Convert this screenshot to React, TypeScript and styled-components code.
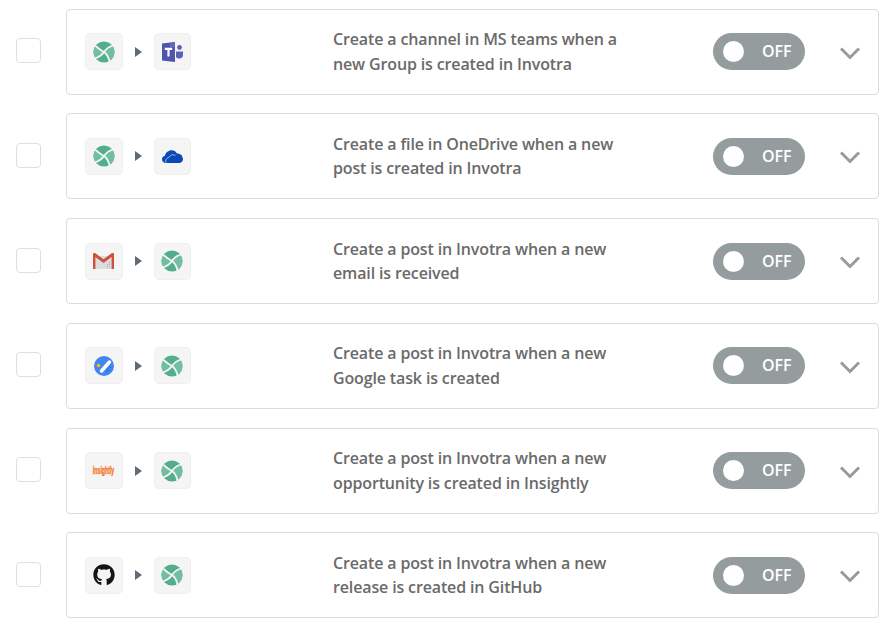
import styled, { createGlobalStyle } from "styled-components";
import { FaGithub } from "react-icons/fa";
import { ReactNode } from "react";

const GlobalStyle = createGlobalStyle`
  html, body {
    margin: 0;
    padding: 0;
    background: #fff;
    font-family: "Open Sans", "Liberation Sans", sans-serif;
  }
`;

const List = styled.div`
  display: flex;
  flex-direction: column;
  gap: 18.75px;
  padding: 8.6px 7px 0 16px;
`;

const Row = styled.div`
  display: flex;
  align-items: center;
  gap: 25px;
`;

const Checkbox = styled.div`
  width: 25px;
  height: 25px;
  margin-bottom: 2px;
  flex-shrink: 0;
  box-sizing: border-box;
  border: 1px solid #d9e1e1;
  border-radius: 4px;
  background: #fff;
`;

const Card = styled.div`
  flex: 1;
  height: 86px;
  box-sizing: border-box;
  display: flex;
  align-items: center;
  padding: 0 17px 0 18px;
  border: 1px solid #dcdcdc;
  border-radius: 4px;
  background: #fff;
`;

const Flow = styled.div`
  width: 248px;
  flex-shrink: 0;
  display: flex;
  align-items: center;
`;

const Tile = styled.div`
  width: 37.5px;
  height: 37px;
  display: flex;
  align-items: center;
  justify-content: center;
  border: 1px solid #efefef;
  box-sizing: border-box;
  border-radius: 5px;
  background: #f5f5f5;
`;

const Arrow = styled.div`
  width: 0;
  height: 0;
  margin: 0 12px;
  border-style: solid;
  border-width: 5px 0 5px 7px;
  border-color: transparent transparent transparent #5f6b75;
`;

const Description = styled.div`
  flex: 1;
  font-size: 16px;
  line-height: 24.5px;
  font-weight: 600;
  letter-spacing: -0.14px;
  color: #6a6a6a;
`;

const Toggle = styled.div`
  width: 92px;
  height: 37px;
  flex-shrink: 0;
  box-sizing: border-box;
  display: flex;
  align-items: center;
  gap: 18px;
  padding-left: 10px;
  border-radius: 19px;
  background: #959c9e;
`;

const Knob = styled.span`
  width: 21px;
  height: 21px;
  border-radius: 50%;
  background: #fff;
`;

const ToggleLabel = styled.span`
  font-size: 16px;
  font-weight: 600;
  color: #fff;
  margin-bottom: 1px;
`;

const Chevron = styled.svg`
  width: 22px;
  height: 14px;
  margin: 2px 0 0 34px;
  flex-shrink: 0;
`;

const InsightlyMark = styled.span`
  display: inline-block;
  font-family: "Liberation Sans", sans-serif;
  font-size: 10px;
  font-weight: 700;
  transform: scaleX(0.52);
  -webkit-text-stroke: 0.3px #f26f21;
  color: #f26f21;
`;

const Invotra = () => (
  <svg width="22" height="22" viewBox="0 0 22 22">
    <circle cx="11" cy="11" r="10.5" fill="#52ae8b" />
    <path d="M2.500 5C6 8 8 9.500 11 11 9 14 6 16 2.500 17A10.500 10.500 0 0 1 2.500 5Z" fill="#72bea1" />
    <path d="M19.500 5C16 5.500 13 8 11 11c3 2 4.500 5 5.500 9A10.500 10.500 0 0 0 19.500 5Z" fill="#72bea1" />
    <path d="M2.500 5C6 8 8 9.500 11 11c3 2 4.500 5 5.500 9.500M20 4.500C16 5.500 13 8 11 11 9 14 6 16 2 17.500" fill="none" stroke="#f5f5f5" strokeWidth="1.800" />
  </svg>
);

const Teams = () => (
  <svg width="21" height="20" viewBox="0 0 21 20">
    <path d="M0 1.500 13 0V20L0 18.500Z" fill="#4f55ad" />
    <path d="M8 .9 13 0V5H8Z" fill="#6268bb" />
    <path d="M2.800 5.800h7.400v2.200H7.600v6.500H5.400V8H2.800Z" fill="#fff" />
    <circle cx="17.500" cy="5.500" r="2.400" fill="#5b62b8" />
    <path d="M14 9.500H21V13c0 2-1.500 3.500-3.500 3.500-1.500 0-2.800-.5-3.500-1.500Z" fill="#5b62b8" />
  </svg>
);

const OneDrive = () => (
  <svg width="21" height="13" viewBox="0 0 21 13">
    <path d="M4 13C1.500 13 0 11.300 0 9.300 0 7.500 1.200 6.200 2.800 6 3.800 2.500 6.500.3 9.700.3c2.300 0 4.300 1.200 5.300 3.300 3 0 5 1.400 5.400 3.600.4.600.6 1.200.6 1.900 0 2.200-1.500 3.900-3.500 3.900Z" fill="#0a4ab5" />
    <path d="M4 12.800C3 10 4.500 8 7 7.500 8 5 11 4 13.500 5.500" fill="none" stroke="#dfe8f5" strokeWidth=".7" />
  </svg>
);

const Gmail = () => (
  <svg width="21" height="16" viewBox="0 0 21 16">
    <path d="M2 3h17v13H2Z" fill="#dcdcdc" />
    <path d="M2 1 10.500 8 19 1v2.500L10.500 10.500 2 3.500Z" fill="#bdbdbd" />
    <path d="M0 1C0 .2 1.200-.3 2 0L10.500 6.300 19 0c.8-.3 2 .2 2 1V16h-2.400V4L10.500 9.800 2.400 4V16H0Z" fill="#d0503c" />
    <path d="M16.500 9v6.500M14.500 11v4.500" stroke="#999" strokeWidth=".8" strokeDasharray="1 1.200" />
  </svg>
);

const GoogleTasks = () => (
  <svg width="20" height="20" viewBox="0 0 20 20">
    <circle cx="10" cy="10" r="10" fill="#4285f4" />
    <path d="M7.500 15 15.500 6" stroke="#fff" strokeWidth="3.500" strokeLinecap="round" />
    <circle cx="4.500" cy="9.500" r="1.800" fill="#fbbc04" />
    <circle cx="13.500" cy="13" r=".6" fill="#1a4fa8" />
    <circle cx="16" cy="11.500" r=".6" fill="#1a4fa8" />
    <circle cx="12.500" cy="15.500" r=".6" fill="#1a4fa8" />
    <circle cx="15" cy="14.500" r=".6" fill="#1a4fa8" />
  </svg>
);

const icons: Record<string, ReactNode> = {
  invotra: <Invotra />,
  teams: <Teams />,
  onedrive: <OneDrive />,
  gmail: <Gmail />,
  tasks: <GoogleTasks />,
  insightly: <InsightlyMark>insightly</InsightlyMark>,
  github: <FaGithub size={22} color="#161514" />,
};

const rules = [
  { from: "invotra", to: "teams", lines: ["Create a channel in MS teams when a", "new Group is created in Invotra"] },
  { from: "invotra", to: "onedrive", lines: ["Create a file in OneDrive when a new", "post is created in Invotra"] },
  { from: "gmail", to: "invotra", lines: ["Create a post in Invotra when a new", "email is received"] },
  { from: "tasks", to: "invotra", lines: ["Create a post in Invotra when a new", "Google task is created"] },
  { from: "insightly", to: "invotra", lines: ["Create a post in Invotra when a new", "opportunity is created in Insightly"] },
  { from: "github", to: "invotra", lines: ["Create a post in Invotra when a new", "release is created in GitHub"] },
];

function App() {
  return (
    <List>
      <GlobalStyle />
      {rules.map((rule) => (
        <Row key={rule.lines[0] + rule.lines[1]}>
          <Checkbox />
          <Card>
            <Flow>
              <Tile>{icons[rule.from]}</Tile>
              <Arrow />
              <Tile>{icons[rule.to]}</Tile>
            </Flow>
            <Description>
              {rule.lines[0]}
              <br />
              {rule.lines[1]}
            </Description>
            <Toggle>
              <Knob />
              <ToggleLabel>OFF</ToggleLabel>
            </Toggle>
            <Chevron viewBox="0 0 22 14">
              <path d="M2 2.500 11 11.500 20 2.500" fill="none" stroke="#959c9e" strokeWidth="3" />
            </Chevron>
          </Card>
        </Row>
      ))}
    </List>
  );
}

export default App;
